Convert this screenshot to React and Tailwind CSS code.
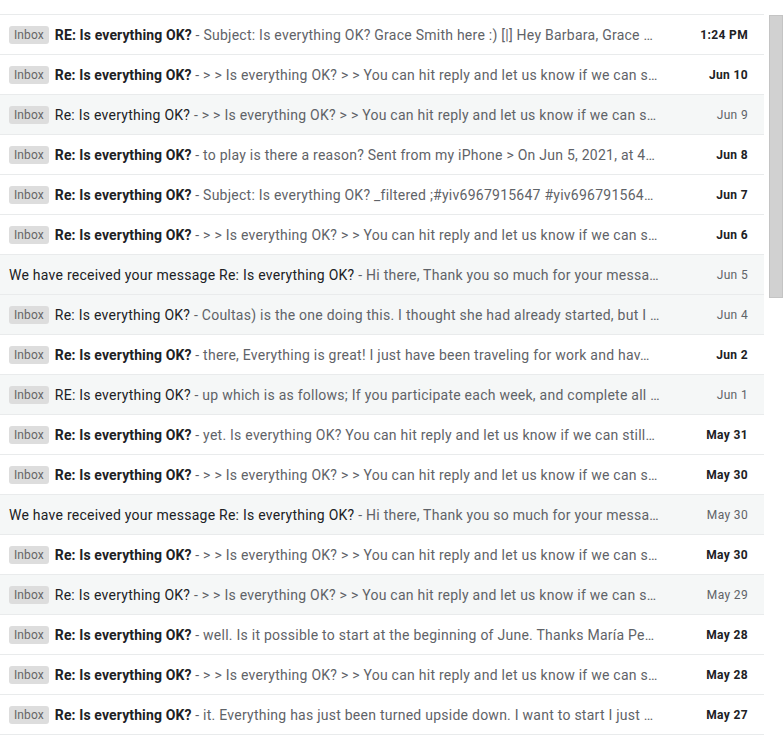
const rows = [
  { badge: true, unread: true, subject: "RE: Is everything OK?", snippet: "Subject: Is everything OK? Grace Smith here :) [|] Hey Barbara, Grace …", date: "1:24 PM" },
  { badge: true, unread: true, subject: "Re: Is everything OK?", snippet: "> > Is everything OK? > > You can hit reply and let us know if we can s…", date: "Jun 10" },
  { badge: true, unread: false, subject: "Re: Is everything OK?", snippet: "> > Is everything OK? > > You can hit reply and let us know if we can s…", date: "Jun 9" },
  { badge: true, unread: true, subject: "Re: Is everything OK?", snippet: "to play is there a reason? Sent from my iPhone > On Jun 5, 2021, at 4…", date: "Jun 8" },
  { badge: true, unread: true, subject: "Re: Is everything OK?", snippet: "Subject: Is everything OK? _filtered ;#yiv6967915647 #yiv696791564…", date: "Jun 7" },
  { badge: true, unread: true, subject: "Re: Is everything OK?", snippet: "> > Is everything OK? > > You can hit reply and let us know if we can s…", date: "Jun 6" },
  { badge: false, unread: false, subject: "We have received your message Re: Is everything OK?", snippet: "Hi there, Thank you so much for your messa…", date: "Jun 5" },
  { badge: true, unread: false, subject: "Re: Is everything OK?", snippet: "Coultas) is the one doing this. I thought she had already started, but I …", date: "Jun 4" },
  { badge: true, unread: true, subject: "Re: Is everything OK?", snippet: "there, Everything is great! I just have been traveling for work and hav…", date: "Jun 2" },
  { badge: true, unread: false, subject: "RE: Is everything OK?", snippet: "up which is as follows; If you participate each week, and complete all …", date: "Jun 1" },
  { badge: true, unread: true, subject: "Re: Is everything OK?", snippet: "yet. Is everything OK? You can hit reply and let us know if we can still…", date: "May 31" },
  { badge: true, unread: true, subject: "Re: Is everything OK?", snippet: "> > Is everything OK? > > You can hit reply and let us know if we can s…", date: "May 30" },
  { badge: false, unread: false, subject: "We have received your message Re: Is everything OK?", snippet: "Hi there, Thank you so much for your messa…", date: "May 30" },
  { badge: true, unread: true, subject: "Re: Is everything OK?", snippet: "> > Is everything OK? > > You can hit reply and let us know if we can s…", date: "May 30" },
  { badge: true, unread: false, subject: "Re: Is everything OK?", snippet: "> > Is everything OK? > > You can hit reply and let us know if we can s…", date: "May 29" },
  { badge: true, unread: true, subject: "Re: Is everything OK?", snippet: "well. Is it possible to start at the beginning of June. Thanks María Pe…", date: "May 28" },
  { badge: true, unread: true, subject: "Re: Is everything OK?", snippet: "> > Is everything OK? > > You can hit reply and let us know if we can s…", date: "May 28" },
  { badge: true, unread: true, subject: "Re: Is everything OK?", snippet: "it. Everything has just been turned upside down. I want to start I just …", date: "May 27" },
];

const MailRow = ({ row }) => (
  <div
    className={
      "h-10 flex flex-row items-center border-b border-[#e9ebec] pl-[9px] pr-4 " +
      (row.unread ? "bg-white" : "bg-[#f5f7f7]")
    }
  >
    <div className="flex-1 min-w-0 flex flex-row items-center gap-[6px]">
      {row.badge && (
        <span className="shrink-0 h-[18px] px-[5px] rounded-[3px] bg-[#dddddd] text-[#666666] text-[12px] leading-[18px] tracking-[0.1px]">
          Inbox
        </span>
      )}
      <div className="min-w-0 truncate text-[14px] leading-5 tracking-[0.25px] text-[#5f6368]">
        <span
          className={
            row.unread
              ? "font-bold text-[#202124] tracking-[0.12px]"
              : "text-[#202124]"
          }
        >
          {row.subject}
        </span>
        <span> - {row.snippet}</span>
      </div>
    </div>
    <div
      className={
        "w-[80px] shrink-0 text-right text-[12px] tracking-[0.35px] " +
        (row.unread ? "font-bold text-[#202124]" : "text-[#5f6368]")
      }
    >
      {row.date}
    </div>
  </div>
);

const App = () => {
  return (
    <div className="w-[783px] h-[741px] bg-white overflow-hidden flex flex-row font-['Roboto','Liberation_Sans',sans-serif]">
      <div className="w-[764px] pt-[14px]">
        <div className="border-t border-[#e9ebec]">
          {rows.map((row, i) => (
            <MailRow key={i} row={row} />
          ))}
        </div>
      </div>
      <div className="flex-1 pt-[15px] pl-[5px]">
        <div className="h-[283px] w-full bg-[#d1d1d1] border border-[#c4c4c4]" />
      </div>
    </div>
  );
};

export default App;
